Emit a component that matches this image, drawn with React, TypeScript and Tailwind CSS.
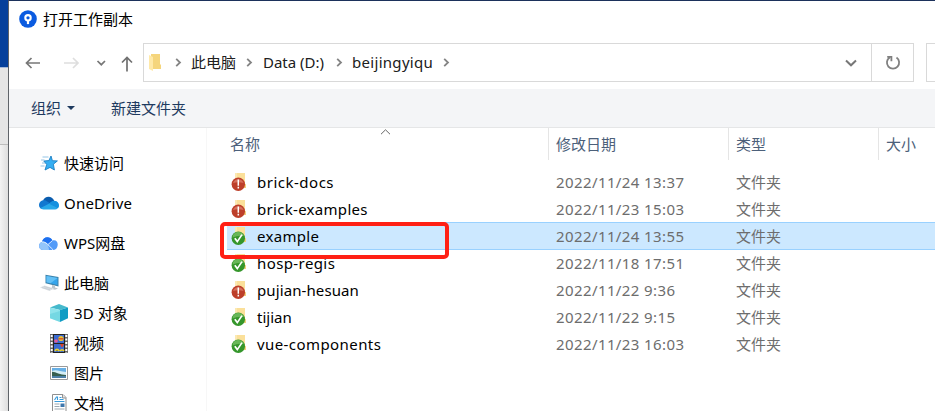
import React from "react";

function AppLogo() {
  return (
    <svg width="18" height="18" viewBox="0 0 18 18">
      <circle cx="9" cy="9" r="8.8" fill="#0b5be0" />
      <circle cx="9" cy="7.8" r="2.7" fill="none" stroke="#fff" strokeWidth="2.1" />
      <path d="M9 10.5v3.6" stroke="#fff" strokeWidth="2.2" />
    </svg>
  );
}

function Chevron({ className = "" }: { className?: string }) {
  return (
    <svg className={className} width="7" height="9" viewBox="0 0 7 9" fill="none" stroke="#848484" strokeWidth="1.8">
      <path d="M1.2 0.8L5 4.5L1.2 8.2" />
    </svg>
  );
}

function FolderIcon({ ok }: { ok: boolean }) {
  return (
    <svg width="16" height="20" viewBox="0 0 16 20" className="shrink-0">
      <path d="M4 1H8V15H4z" fill="#fbe9b4" />
      <path d="M6 1H14V11.5L15 12.5V16H6z" fill="#fbe09a" />
      <path d="M13 11.5L15 12.5V16H12z" fill="#f3d27c" />
      {ok ? (
        <>
          <circle cx="7.3" cy="12.2" r="6.7" fill="#35962b" />
          <path d="M1.5 11.5A5.8 5.8 0 0 1 12.8 10Q7 9 1.5 11.5z" fill="#68b758" />
          <path d="M3.8 12.2L6.3 15.6L11 8.6" stroke="#fff" strokeWidth="1.7" fill="none" />
        </>
      ) : (
        <>
          <circle cx="7.3" cy="12.2" r="6.7" fill="#bd3f2a" />
          <path d="M2 11A5.6 5.6 0 0 1 12.6 11Q7 9.5 2 11z" fill="#d5705c" />
          <path d="M7.3 7.6v6.200M7.3 14.800v1.800" stroke="#fff" strokeWidth="1.500" />
        </>
      )}
    </svg>
  );
}

function StarIcon() {
  return (
    <svg width="18" height="18" viewBox="0 0 18 18">
      <path d="M11 2l1.4 4.7 5 .2-4 3.3 1 5.8-4.4-2.6-5 2.6 1.7-5.5L3.8 7l5.1-.4z" fill="#35aef2" stroke="#1b7fc4" strokeWidth=".9" />
      <path d="M2.5 3h6M1 6h3.5M2 9h3M0.5 12h4" stroke="#79b6df" strokeWidth=".8" />
    </svg>
  );
}

function OneDriveIcon() {
  return (
    <svg width="20" height="14" viewBox="0 0 20 14">
      <path d="M4 4.6C5.6-.2 13-.8 15.2 4.7L11 8z" fill="#0a5cae" />
      <path d="M0 9C0 5.5 4 3.3 7 4.8L13 8.5 3 13C1 12.5 0 11 0 9z" fill="#1278d0" />
      <path d="M12.5 6C14 4 20 4.5 20 9.3 20 12 18 13.5 16 13.5H4.5C3 13.5 2 12.7 1.5 12L10 7.8z" fill="#28a8e9" />
      <path d="M12 6c2-2 5-1.7 7 .7l1 3-1 2.5-9-4.5z" fill="#1590df" />
    </svg>
  );
}

function WpsIcon() {
  return (
    <svg width="19" height="13" viewBox="0 0 19 13">
      <path d="M3 5C4-.7 11-1.6 13.5 3.5 17 2.5 19 5 18.7 8c-.2 3-2 5-5 5H4C1.5 13 0 11.3 0 9c0-2 1-3.5 3-4z" fill="#539bf8" />
      <path d="M3 5C4-.7 11-1.6 13.5 3.5L9 7.5C7.5 5 5 4.2 3 5z" fill="#1e70ef" />
      <path d="M3 5c4-1 6.5 2.5 7 8H4C-1 13-1 6 3 5z" fill="#93c5fa" />
      <path d="M3 5c4-.5 6 3 11 7.8M9 7.5l4.5-4" stroke="#eef7ff" fill="none" strokeWidth=".9" />
    </svg>
  );
}

function PcIcon() {
  return (
    <svg width="20" height="18" viewBox="0 0 20 18">
      <path d="M5.5 .8L18.5 3v9.5L5.5 9.3z" fill="#3d83ac" />
      <path d="M6.5 2l11 1.9v7L6.5 8.2z" fill="#35a5ec" />
      <path d="M6.5 2l11 1.9-7 5.3-4-1z" fill="#63c0f5" />
      <path d="M12 11l3 .6v2l3 .8-3 1.3-5-1.2 2-1z" fill="#bdc6cc" />
      <path d="M0 13.6L4.5 11.5 14 14.5l-4.5 2.4z" fill="#dce1e5" />
      <path d="M2 13.6l8 2.2M4 12.6l8 2.2" stroke="#b9c1c8" strokeWidth=".5" />
    </svg>
  );
}

function CubeIcon() {
  return (
    <svg width="18" height="18" viewBox="0 0 18 18">
      <path d="M0 3.5L9 0l9 3.5L10 6z" fill="#46b9cc" />
      <path d="M0 3.5L10 6v12L0 14.3z" fill="#90e4ec" />
      <path d="M18 3.5L10 6v12l8-3.7z" fill="#109cc4" />
      <path d="M0 10l10-3v11L0 14.3z" fill="#55cad9" opacity=".45" />
    </svg>
  );
}

function VideoIcon() {
  return (
    <svg width="18" height="19" viewBox="0 0 18 19">
      <path d="M0 0h18v19H0z" fill="#666" />
      <path d="M1.7 1v18M16.3 1v18" stroke="#fff" strokeWidth="2" strokeDasharray="2 1.5" />
      <path d="M3 0h12v19H3z" fill="#222" />
      <path d="M4 1h10v8H4zM4 10h10v8H4z" fill="#3b6bd0" />
      <circle cx="6" cy="7" r="1.8" fill="#e25a9a" />
      <circle cx="11" cy="4.5" r="2.6" fill="#e7c032" />
      <path d="M8.5 4.8h5" stroke="#d34026" strokeWidth="1.2" />
      <path d="M10 10h4l-1.5 3h-1z" fill="#d9452a" />
      <path d="M5 17c1-2 3-2 4 0M10 17c1-1.5 3-1.5 4 0" stroke="#e6cf36" strokeWidth="1.8" />
    </svg>
  );
}

function ImageIcon() {
  return (
    <svg width="18" height="14" viewBox="0 0 18 14">
      <path d="M.5.5h17v13H.5z" fill="#fff" stroke="#9a9a9a" />
      <path d="M2 2h14v10H2z" fill="#67afe5" />
      <path d="M2 5c4-2 7 0 14 1v3H2z" fill="#d3edf5" />
      <path d="M2 5.7c4 .3 8 3 14 3.3v1H2z" fill="#365f50" />
      <path d="M2 10h14v2H2z" fill="#4c80a8" />
    </svg>
  );
}

function DocumentIcon() {
  return (
    <svg className="ml-0.5" width="15" height="18" viewBox="0 0 15 18">
      <path d="M.5.5h10.5L14 3.5V18H.5z" fill="#fff" stroke="#909090" />
      <path d="M10.5.5V4H14" fill="#e5e5e5" stroke="#909090" />
      <path d="M2.5 6l2-3h1v3M7.5 3.5h2M7.5 5.5h4M2.5 7.5h10" stroke="#379adb" strokeWidth="1.1" fill="none" />
      <path d="M2.5 10h5M2.5 12.5h5M2.5 15h10" stroke="#9da8b0" />
      <path d="M8.5 9.5h4V13h-4z" fill="#3e77ac" />
    </svg>
  );
}

const places = [
  { label: "快速访问", icon: <StarIcon />, row: "h-10 pl-[31px]", text: "" },
  { label: "OneDrive", icon: <OneDriveIcon />, row: "h-10 pl-[30px]", text: "ml-px tracking-[0.2px]" },
  { label: "WPS网盘", icon: <WpsIcon />, row: "h-10 pl-[30px]", text: "ml-px" },
  { label: "此电脑", icon: <PcIcon />, row: "h-10 pl-[31px]", text: "" },
  { label: "3D 对象", icon: <CubeIcon />, row: "-mt-[5px] h-[30px] pl-[41px]", text: "tracking-[0.1px]" },
  { label: "视频", icon: <VideoIcon />, row: "h-[30px] pl-[41px]", text: "" },
  { label: "图片", icon: <ImageIcon />, row: "h-[30px] pl-[41px]", text: "" },
  { label: "文档", icon: <DocumentIcon />, row: "h-[30px] pl-[41px]", text: "" },
];

const files = [
  { name: "brick-docs", date: "2022/11/24 13:37", ok: false, text: "tracking-[0.5px]" },
  { name: "brick-examples", date: "2022/11/23 15:03", ok: false, text: "tracking-[0.3px]" },
  { name: "example", date: "2022/11/24 13:55", ok: true, selected: true, text: "tracking-[0.3px]" },
  { name: "hosp-regis", date: "2022/11/18 17:51", ok: true, text: "tracking-[0.4px]" },
  { name: "pujian-hesuan", date: "2022/11/22 9:36", ok: false, text: "tracking-[0.1px]" },
  { name: "tijian", date: "2022/11/22 9:15", ok: true, text: "" },
  { name: "vue-components", date: "2022/11/23 16:03", ok: true, text: "tracking-[0.42px]" },
];

export default function App() {
  return (
    <div className="relative flex h-[411px] w-[935px] overflow-hidden bg-white font-['Noto_Sans','Noto_Sans_CJK_SC',sans-serif] text-[15px] leading-5 text-black">
      <div className="flex w-2 shrink-0 flex-col">
        <div className="h-[67px] bg-[#06409b]" />
        <div className="h-[78px] border-t border-b border-t-[#a5b9d8] border-b-[#bdbdbd] bg-[#e5e5e5]" />
        <div className="grow bg-linear-to-r from-[#f3f3f3] to-[#dedede]" />
      </div>
      <div className="flex min-w-0 grow flex-col border-t border-l border-t-[#1c315b] border-l-[#5f6368]">
        <header className="flex h-[42px] shrink-0 items-center pb-[6px] pl-[10px]">
          <AppLogo />
          <span className="ml-[6px]">打开工作副本</span>
        </header>
        <nav className="flex h-[39px] shrink-0">
          <div className="flex w-[134px] items-center pl-4">
            <svg width="112" height="20" viewBox="0 0 112 20" fill="none" stroke="#777" strokeWidth="1.7">
              <path d="M15 10H1.5M6.5 5L1.5 10l5 5" />
              <path d="M39 10h14M48 5l5 5-5 5" stroke="#dedede" />
              <path d="M72.5 8l3.8 3.7L80 8" />
              <path d="M102 18.5v-14M97 9.5l5-5 5 5" stroke="#707070" />
            </svg>
          </div>
          <div className="flex w-[729px] items-center border border-[#d9d9d9] pb-px pl-[5px] text-[#202020]">
            <svg width="13" height="17" viewBox="0 0 13 17">
              <path d="M2 0h9v10l1 1v4H2z" fill="#f5d57c" />
              <path d="M0 1l4 2v14l-4-2z" fill="#ffe9a8" />
            </svg>
            <Chevron className="ml-[13px]" />
            <span className="ml-[9px] w-[45px] whitespace-nowrap">此电脑</span>
            <Chevron className="ml-[10px]" />
            <span className="ml-[10px] w-[63px] whitespace-nowrap">Data (D:)</span>
            <Chevron className="ml-[10px]" />
            <span className="ml-[9px] w-[82px] tracking-[0.3px]">beijingyiqu</span>
            <Chevron className="ml-[9px]" />
            <svg className="mt-0.5 mr-[14px] ml-auto" width="12" height="8" viewBox="0 0 12 8" fill="none" stroke="#777" strokeWidth="2">
              <path d="M1 1.5L6 6.3l5-4.8" />
            </svg>
          </div>
          <div className="-ml-px flex w-[43px] items-center justify-center border border-[#d9d9d9]">
            <svg width="16" height="16" viewBox="0 0 16 16" fill="none" stroke="#808080" strokeWidth="1.8">
              <path d="M11.5 2.6A6.1 6.1 0 1 1 4.7 2.5M2.2 1.8h4.2v4.4" />
            </svg>
          </div>
          <div className="ml-3 grow border border-r-0 border-[#d9d9d9]" />
        </nav>
        <div className="mt-[7px] flex h-[39px] shrink-0 items-center border-b border-[#e5e6e7] bg-[#f4f5f7] pl-[22px] text-[#1e3a5f]">
          <span>组织</span>
          <span className="ml-[6px] border-x-4 border-t-4 border-x-transparent border-t-[#1e3a5f]" />
          <span className="ml-[36px]">新建文件夹</span>
        </div>
        <div className="flex min-h-0 grow">
          <aside className="w-[198px] shrink-0 overflow-hidden border-r border-[#f7f7f7] pt-[15px]">
            {places.map((p) => (
              <div key={p.label} className={`flex items-center ${p.row}`}>
                <span className="flex w-6 shrink-0 items-center">{p.icon}</span>
                <span className={`whitespace-nowrap ${p.text}`}>{p.label}</span>
              </div>
            ))}
          </aside>
          <main className="flex min-w-0 grow flex-col">
            <div className="flex h-[32px] shrink-0 items-center text-[#4c607a]">
              <div className="flex h-full w-[342px] items-center border-r border-[#e5e5e5] pl-[23px]">
                <span>名称</span>
                <svg className="mb-[24px] ml-[120px]" width="11" height="6" viewBox="0 0 11 6" fill="none" stroke="#666">
                  <path d="M1 5.2L5.5.8 10 5.2" />
                </svg>
              </div>
              <div className="flex h-full w-[180px] items-center border-r border-[#e5e5e5] pl-[7px]">修改日期</div>
              <div className="flex h-full w-[150px] items-center border-r border-[#e5e5e5] pl-[7px]">类型</div>
              <div className="pl-[7px]">大小</div>
            </div>
            <div className="ml-5 flex flex-col pt-2">
              {files.map((f) => (
                <div
                  key={f.name}
                  className={`flex shrink-0 items-center border-y ${f.selected ? "-mb-px h-7 border-[#99d1ff] bg-[#cce8ff]" : "h-[27px] border-transparent"}`}
                >
                  <div className="flex w-[329px] items-center pl-[4px]">
                    <FolderIcon ok={f.ok} />
                    <span className={`ml-[10px] ${f.text}`}>{f.name}</span>
                  </div>
                  <span className="w-[180px] tracking-[0.4px] text-[#6d6d6d]">{f.date}</span>
                  <span className="text-[#6d6d6d]">文件夹</span>
                </div>
              ))}
            </div>
          </main>
        </div>
      </div>
      <div className="absolute top-[222px] left-[220px] h-[37px] w-[229px] rounded-[5px] border-4 border-[#ff2015]" />
    </div>
  );
}
